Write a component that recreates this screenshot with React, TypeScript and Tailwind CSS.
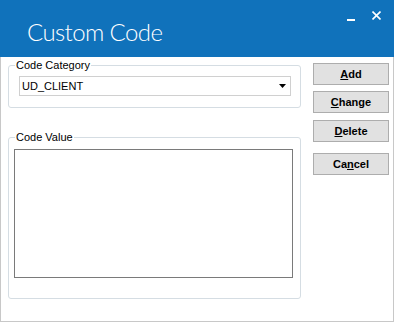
import React from "react";

const btn =
  "w-[76px] h-[22px] bg-[#e1e1e1] border border-[#adadad] text-[11px] font-bold text-black flex items-center justify-center leading-none";

export default function App() {
  return (
    <div
      className="w-[394px] h-[322px] flex flex-col bg-white"
      style={{ fontFamily: '"Liberation Sans", Arial, sans-serif' }}
    >
      <div className="h-[57px] bg-[#1072bb] flex justify-between shrink-0">
        <div
          className="pl-[27px] pt-[16px] text-[24px] font-light text-white leading-[32px] tracking-[-0.6px]"
          style={{ fontFamily: 'Lato, sans-serif' }}
        >
          Custom Code
        </div>
        <div className="flex items-start pt-[11px] pr-[13px] gap-[17px]">
          <div className="w-[8px] h-[9px] flex items-end">
            <div className="w-[8px] h-[2px] bg-white mb-[-1px]" />
          </div>
          <svg width="9" height="9" viewBox="0 0 9 9">
            <path d="M0.5 0.5 L8.5 8.5 M8.5 0.5 L0.5 8.5" stroke="white" strokeWidth="1.6" />
          </svg>
        </div>
      </div>
      <div className="flex-1 flex border-x border-b border-[#c8c8c8]">
        <div className="pl-[7px] pt-[2px] flex flex-col">
          <fieldset className="w-[293px] h-[49px] border border-[#d5dde3] rounded-[3px]">
            <legend className="ml-[6px] px-[1px] text-[11px] leading-[13px] text-black">
              Code Category
            </legend>
            <div className="mt-[4px] ml-[10px] mr-[9px] h-[20px] border border-[#d0d0d0] bg-white flex items-center justify-between pl-[2px] pr-[4px]">
              <span className="text-[11px] text-black leading-none">UD_CLIENT</span>
              <svg width="7" height="4" viewBox="0 0 7 4">
                <path d="M0 0 H7 L3.5 4 Z" fill="black" />
              </svg>
            </div>
          </fieldset>
          <fieldset className="mt-[23px] w-[293px] h-[168px] border border-[#d5dde3] rounded-[3px]">
            <legend className="ml-[6px] px-[1px] text-[11px] leading-[13px] text-black">
              Code Value
            </legend>
            <div className="mt-[5px] ml-[5px] mr-[7px] h-[129px] border border-[#7a7a7a] bg-white" />
          </fieldset>
        </div>
        <div className="ml-[12px] pt-[6px] flex flex-col">
          <button className={btn}>
            <u>A</u>dd
          </button>
          <button className={btn + " mt-[6px]"}>
            <u>C</u>hange
          </button>
          <button className={btn + " mt-[7px]"}>
            <u>D</u>elete
          </button>
          <button className={btn + " mt-[11px]"}>
            Ca<u>n</u>cel
          </button>
        </div>
      </div>
    </div>
  );
}
